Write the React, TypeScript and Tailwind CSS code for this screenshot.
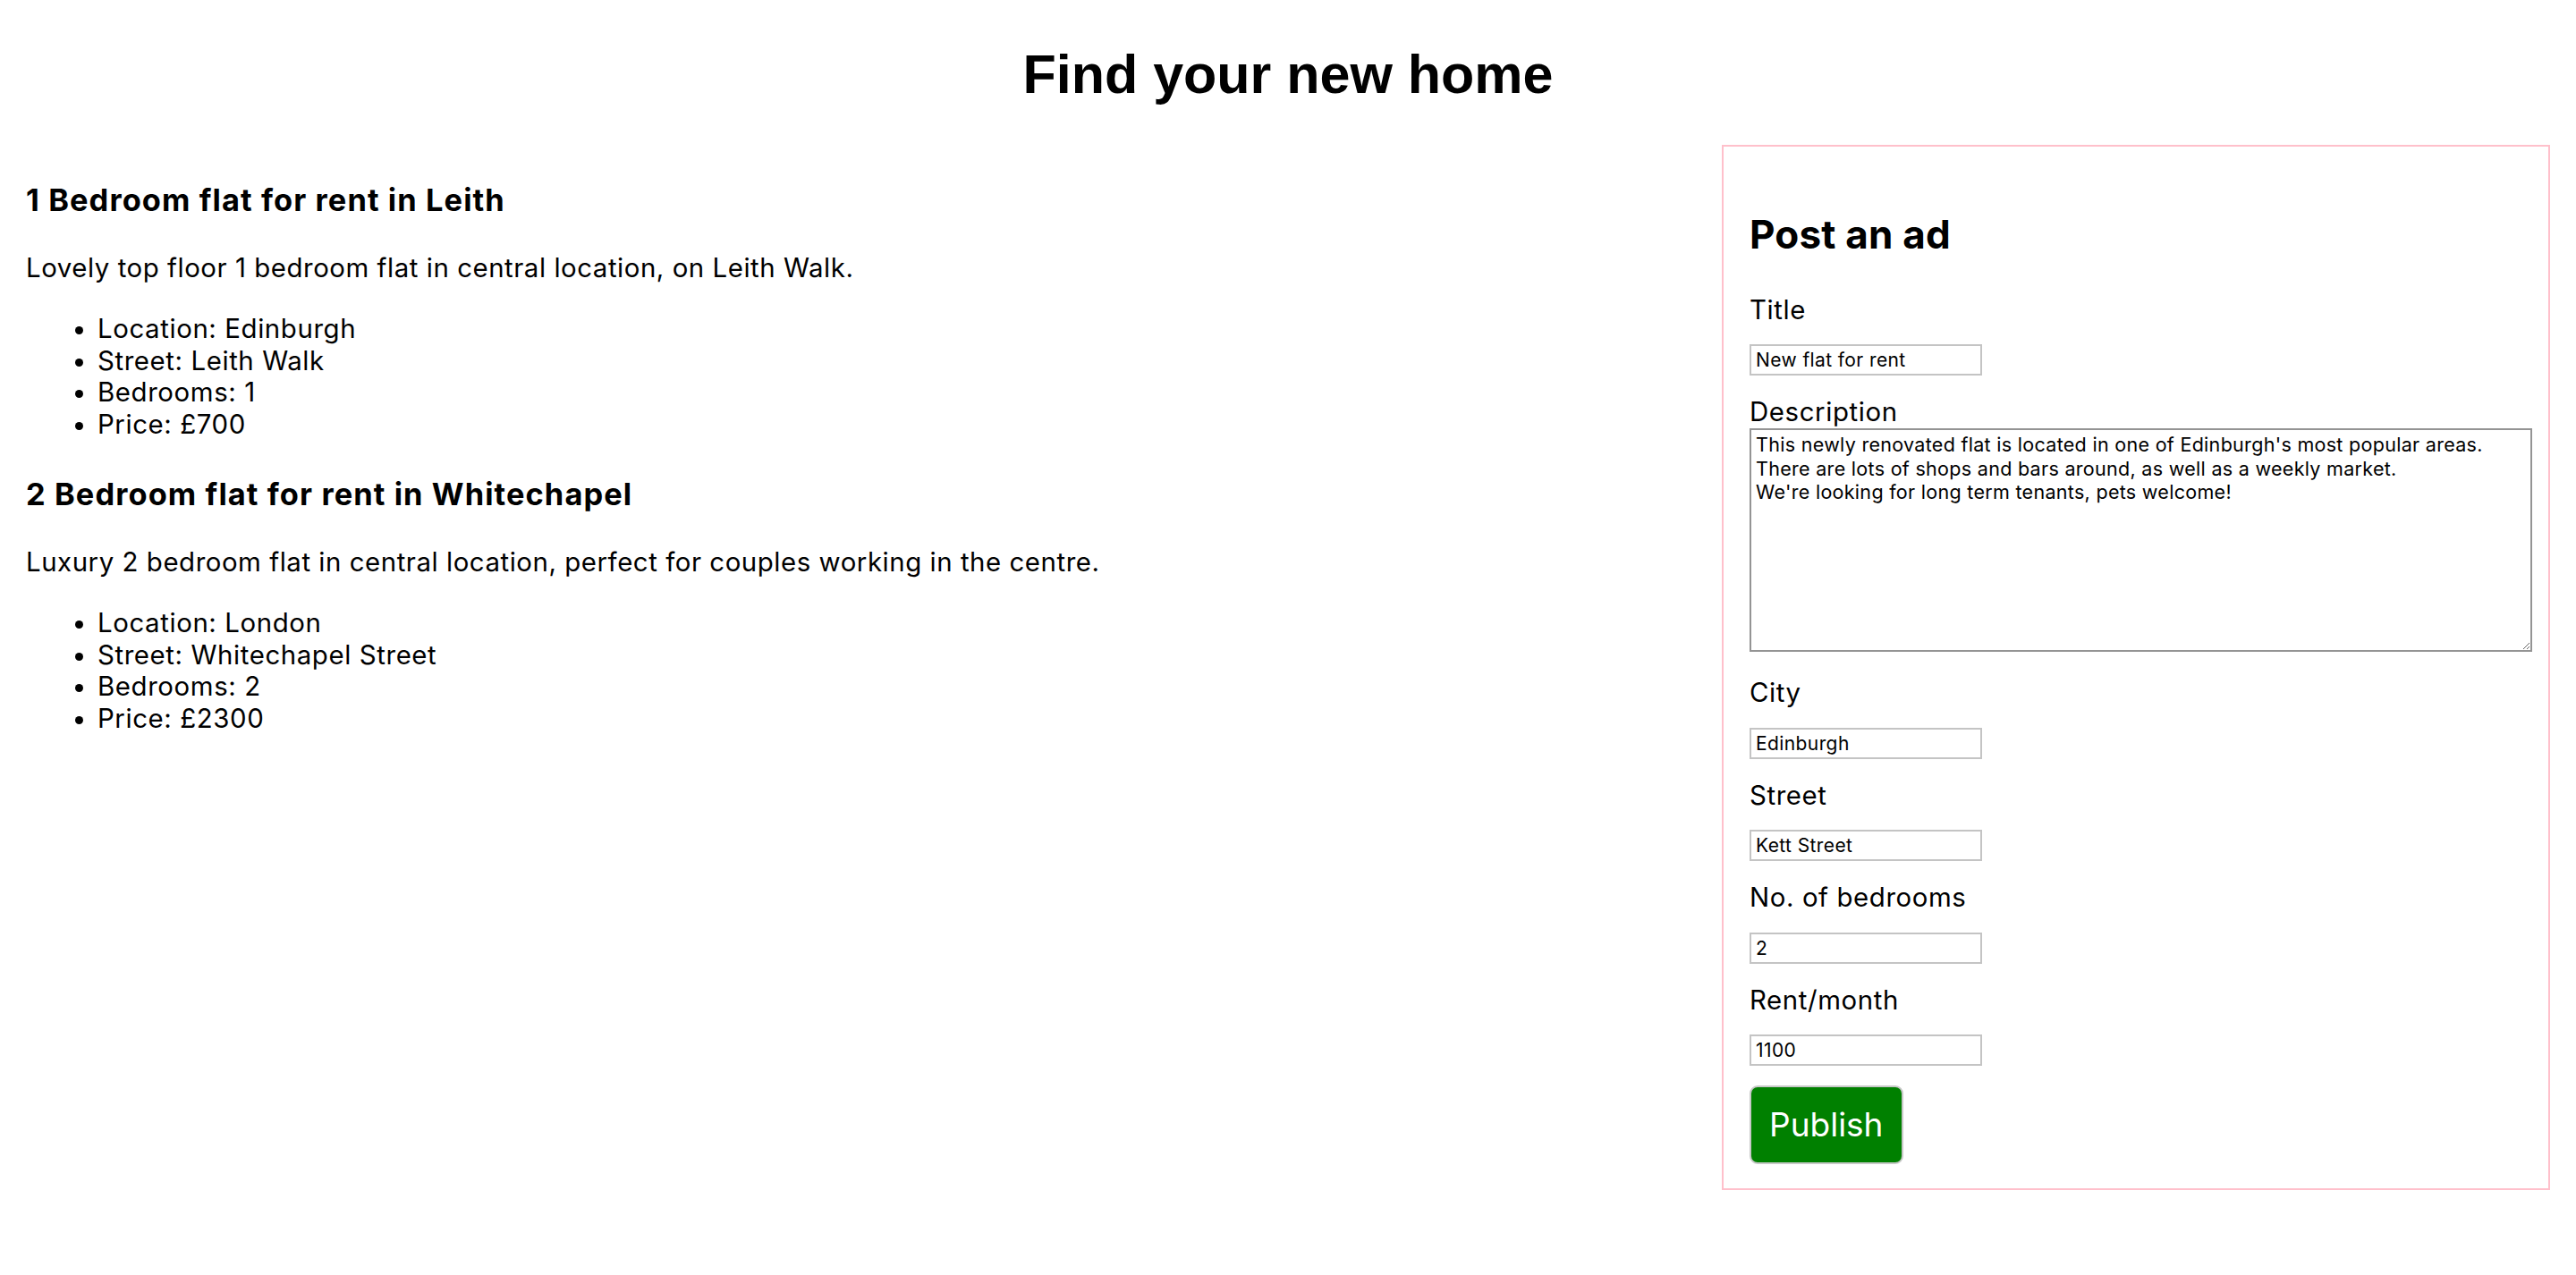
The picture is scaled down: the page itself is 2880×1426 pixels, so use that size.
import React from 'react';

interface Listing {
  title: string;
  description: string;
  location: string;
  street: string;
  bedrooms: number;
  price: string;
}

const listings: Listing[] = [
  {
    title: '1 Bedroom flat for rent in Leith',
    description: 'Lovely top floor 1 bedroom flat in central location, on Leith Walk.',
    location: 'Edinburgh',
    street: 'Leith Walk',
    bedrooms: 1,
    price: '£700',
  },
  {
    title: '2 Bedroom flat for rent in Whitechapel',
    description: 'Luxury 2 bedroom flat in central location, perfect for couples working in the centre.',
    location: 'London',
    street: 'Whitechapel Street',
    bedrooms: 2,
    price: '£2300',
  },
];

const adText =
  "This newly renovated flat is located in one of Edinburgh's most popular areas.\n" +
  'There are lots of shops and bars around, as well as a weekly market.\n' +
  "We're looking for long term tenants, pets welcome!";

const Field = ({ label, value, top = 'mt-[23px]' }: { label: string; value: string; top?: string }) => (
  <>
    <label className={`block ${top} text-[29.4px] leading-[36px] tracking-[0.6px]`}>{label}</label>
    <input
      type="text"
      defaultValue={value}
      className="block mt-[20.5px] w-[260px] h-[35px] border-2 border-[#c4c4c4] px-[5px] text-[21px] leading-[25px] tracking-[0.4px] text-black outline-none"
    />
  </>
);

const ListingCard = ({ item, first }: { item: Listing; first: boolean }) => (
  <div className={first ? '' : 'mt-[39px]'}>
    <h3 className="text-[34.4px] leading-[42px] font-bold tracking-[1.1px]">{item.title}</h3>
    <p className="mt-[37px] text-[29.4px] leading-[36px] tracking-[0.55px]">{item.description}</p>
    <ul className="mt-[32px] list-disc pl-[80px] text-[29.4px] leading-[35.7px] tracking-[0.6px]">
      <li>Location: {item.location}</li>
      <li>Street: {item.street}</li>
      <li>Bedrooms: {item.bedrooms}</li>
      <li>Price: {item.price}</li>
    </ul>
  </div>
);

export default function App() {
  return (
    <div className="min-h-screen bg-white text-black font-['Inter','Noto_Sans',sans-serif]">
      <h1 className="pt-[49px] text-center font-['Liberation_Sans',Arial,sans-serif] text-[61px] leading-[68px] font-bold">
        Find your new home
      </h1>

      <div className="mt-[45px] flex items-start gap-[40px] px-[29px]">
        {/* Listings */}
        <div className="flex-1 pt-[41px]">
          {listings.map((item, i) => (
            <ListingCard key={item.title} item={item} first={i === 0} />
          ))}
        </div>

        {/* Post form */}
        <form
          className="w-[926px] shrink-0 border-2 border-[#ffc0cb] px-[29px] pt-[71.5px] pb-[27px]"
          onSubmit={(e) => e.preventDefault()}
        >
          <h2 className="text-[44px] leading-[53px] font-bold tracking-[0.2px]">Post an ad</h2>
          <Field label="Title" value="New flat for rent" top="mt-[40px]" />
          <label className="block mt-[23px] text-[29.4px] leading-[36px] tracking-[0.6px]">Description</label>
          <textarea
            defaultValue={adText}
            className="block w-[875px] h-[250px] border-2 border-[#949494] px-[5px] pt-[3px] text-[21.5px] leading-[26.6px] tracking-[0.3px] text-black outline-none resize"
          />
          <Field label="City" value="Edinburgh" top="mt-[28px]" />
          <Field label="Street" value="Kett Street" />
          <Field label="No. of bedrooms" value="2" />
          <Field label="Rent/month" value="1100" />
          <button
            type="submit"
            className="block mt-[22px] h-[88px] px-[20px] rounded-[9px] border-2 border-[#c8c8c8] bg-[#008000] text-white text-[37px] leading-[44px]"
          >
            Publish
          </button>
        </form>
      </div>
    </div>
  );
}
